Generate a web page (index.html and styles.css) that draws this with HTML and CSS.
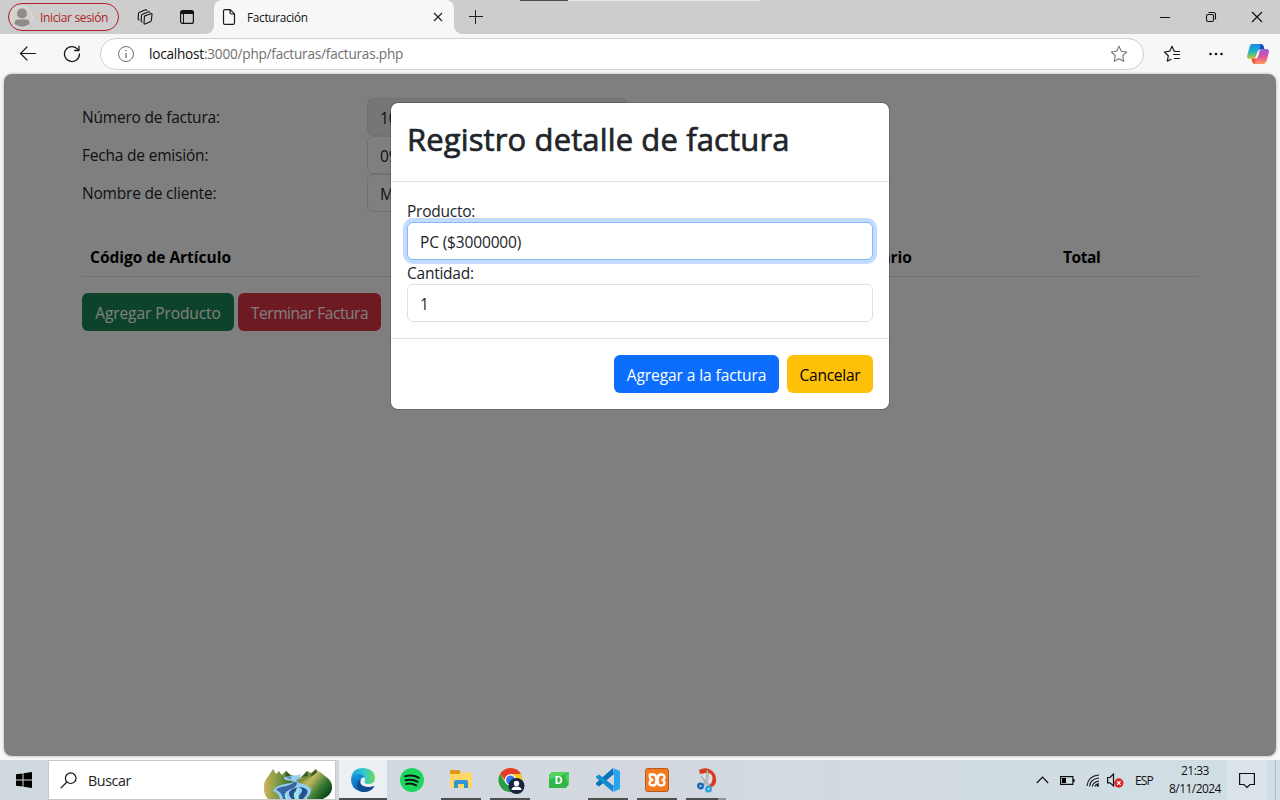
FILE: index.html
```html
<!DOCTYPE html>
<html lang="es">
<head>
<meta charset="utf-8">
<title>Facturación</title>
<link rel="stylesheet" href="styles.css">
</head>
<body>
<div class="screen">
  <header class="titlebar">
    <span class="snap-strip"></span>
    <div class="profile">
      <svg width="22" height="22" viewBox="0 0 22 22"><circle cx="11" cy="11" r="10.5" fill="#d3d0cc" stroke="#dfddda"/><circle cx="11" cy="7.500" r="5" fill="#8f8b88"/><path d="M3.500 18v-1q0-3.500 3.500-3.500h8q3.500 0 3.500 3.500v1q-7 5.500-15 0z" fill="#8f8b88"/></svg>
      <span class="profile-label">Iniciar sesión</span>
    </div>
    <svg class="ico workspaces" width="18" height="18" viewBox="0 0 18 18" fill="none" stroke="#111" stroke-width="1.1" stroke-linejoin="round" stroke-linecap="round"><path d="M8.500 8 15 5.700q1.200-.2 1 .8l-.7 6q-.1 1-1 1.300l-5.300 2.200q-1.100.3-1-.8z"/><path d="M6 14q-1-.4-.9-1.400l.4-4.900q.1-1 1-1.400l6.100-2.500q.9-.2 1.200.6"/><path d="M3 12q-1-.4-.9-1.400l.4-4.900q.1-1 1-1.400l6.100-2.500q.9-.2 1.200.6"/></svg>
    <svg class="ico tabs-menu" width="16" height="16" viewBox="0 0 16 16"><rect x="1.600" y="1.600" width="12.800" height="12.800" rx="2" fill="none" stroke="#111" stroke-width="1.200"/><path d="M1.500 5V3q0-1.500 1.500-1.500h10q1.500 0 1.500 1.500v2z" fill="#111"/><path d="M4.500 5v9" stroke="#111"/></svg>
    <div class="tab">
      <svg width="14" height="18" viewBox="0 0 14 18" fill="none" stroke="#1b1b1b" stroke-width="1.200" stroke-linejoin="round"><path d="M3 1.600h5.200l4.300 4.300v8.600q0 1.900-1.500 1.900H3q-1.500 0-1.500-1.500V3.100Q1.500 1.600 3 1.600zM8 1.800v2.700q0 1.500 1.500 1.500h2.800"/></svg>
      <span class="tab-label">Facturación</span>
      <svg class="tab-close" width="10" height="10" viewBox="0 0 10 10" stroke="#222" stroke-width="1.200"><path d="M1 1l8 8M9 1 1 9"/></svg>
    </div>
    <svg class="ico new-tab" width="14" height="14" viewBox="0 0 14 14" stroke="#222" stroke-width="1"><path d="M6.500 0v14M0 6.500h14"/></svg>
    <div class="window-buttons">
      <svg width="46" height="34" viewBox="0 0 46 34" fill="none" stroke="#111"><path d="M18 17.500h10"/></svg>
      <svg width="46" height="34" viewBox="0 0 46 34" fill="none" stroke="#111" stroke-width="1.100"><rect x="18.500" y="14.500" width="7" height="7" rx="1.500"/><path d="M20.500 12.500h5q2 0 2 2v5"/></svg>
      <svg width="46" height="34" viewBox="0 0 46 34" fill="none" stroke="#111" stroke-width="1.200"><path d="M18 12l10 10M28 12 18 22"/></svg>
    </div>
  </header>

  <nav class="toolbar">
    <svg class="back" width="18" height="16" viewBox="0 0 18 16" fill="none" stroke="#1b1b1b" stroke-width="1.200" stroke-linecap="round" stroke-linejoin="round"><path d="M16.500 7.500h-15M8 1 1.500 7.500 8 14"/></svg>
    <svg class="reload" width="18" height="18" viewBox="0 0 18 18" fill="none" stroke="#1b1b1b" stroke-width="1.300" stroke-linecap="round" stroke-linejoin="round"><path d="M16.500 9A7.500 7.500 0 1 1 14.800 4.300l1.200 1M16 1.200v4.300h-4.300"/></svg>
    <div class="address">
      <svg width="18" height="18" viewBox="0 0 18 18" fill="none" stroke="#6b6b6b"><circle cx="9" cy="9" r="7.500"/><path d="M9 8v5M9 5v1.300" stroke-width="1.200"/></svg>
      <span class="url"><b>localhost</b>:3000/php/facturas/facturas.php</span>
      <svg class="fav" width="18" height="18" viewBox="0 0 18 18" fill="none" stroke="#777" stroke-width="1.100" stroke-linejoin="round"><path d="M9 1.300l2.300 5 5.400.7-4 3.700 1.100 5.600L9 13.700l-4.800 2.600 1.100-5.600L1.300 7l5.400-.7z"/></svg>
    </div>
    <svg class="favorites" width="18" height="18" viewBox="0 0 18 18" fill="none" stroke="#1b1b1b" stroke-width="1.200" stroke-linejoin="round" stroke-linecap="round"><path d="M12 6.200h-.8L9 1.300 6.700 6.200l-5.300.8 3.900 3.800-1 5.300L8 14.300M12.500 6.500h4M10.500 9.500h6M11.500 13.500h5"/></svg>
    <svg class="more" width="14" height="4" viewBox="0 0 14 4" fill="#111"><circle cx="1.500" cy="2" r="1.300"/><circle cx="7" cy="2" r="1.300"/><circle cx="12.500" cy="2" r="1.300"/></svg>
    <svg class="copilot" width="22" height="20" viewBox="0 0 22 20">
      <defs>
        <linearGradient id="cpA" x1="0" y1="0" x2="0" y2="1"><stop offset="0" stop-color="#1789e8"/><stop offset=".5" stop-color="#23b5c5"/><stop offset=".8" stop-color="#79c45a"/><stop offset="1" stop-color="#e8c63a"/></linearGradient>
        <linearGradient id="cpB" x1="0" y1="0" x2="0" y2="1"><stop offset="0" stop-color="#9c5be8"/><stop offset=".5" stop-color="#e04fa0"/><stop offset="1" stop-color="#ff9a55"/></linearGradient>
      </defs>
      <path d="M10 0h4q2 0 2.600 2l1 3.500H12z" fill="#164cc4"/>
      <path d="M5 0h7q2 0 1.400 2L9.800 13q-.8 2-2.800 2H3q-3.600 0-2.800-3.500L2.500 3Q3.300 0 5 0z" fill="url(#cpA)"/>
      <path d="M4.500 14.500H9L10.500 20H8q-2.300 0-2.900-2.500z" fill="#f0583a"/>
      <path d="M14.500 5H19q3.600 0 2.800 3.500L19.500 17q-.8 3-3 3H9q-1.500 0-.9-2l4-11q.7-2 2.400-2z" fill="url(#cpB)"/>
      <path d="M10.500 8q.8-2.200 3.400-2.200-1 .5-1.500 2L11 12.500q-.7 2-3 2z" fill="#fff"/>
    </svg>
  </nav>

  <div class="viewport">
    <main class="page">
      <section class="invoice">
        <span class="label">Número de factura:</span><div class="field readonly">10</div>
        <span class="label">Fecha de emisión:</span><div class="field">09</div>
        <span class="label">Nombre de cliente:</span><div class="field">M</div>
      </section>
      <div class="table-head">
        <span class="th-code">Código de Artículo</span>
        <span class="th-unit">Valor Unitario</span>
        <span class="th-total">Total</span>
      </div>
      <div class="actions">
        <button class="btn success">Agregar Producto</button>
        <button class="btn danger">Terminar Factura</button>
      </div>
    </main>
    <div class="backdrop">
      <div class="modal">
        <div class="modal-header"><h2 class="modal-title">Registro detalle de factura</h2></div>
        <div class="modal-body">
          <span class="modal-label">Producto:</span>
          <div class="field focused"><span class="product">PC ($3000000)</span></div>
          <span class="modal-label">Cantidad:</span>
          <div class="field">1</div>
        </div>
        <div class="modal-footer">
          <button class="btn primary">Agregar a la factura</button>
          <button class="btn warning">Cancelar</button>
        </div>
      </div>
    </div>
  </div>

  <footer class="taskbar">
    <div class="start"><svg width="16" height="16" viewBox="0 0 16 16"><path d="M0 2.300 6.500 1.400V7.500H0zM7.500 1.200 16 0v7.500H7.500zM0 8.500h6.500v6.100L0 13.700zM7.500 8.500H16V16l-8.500-1.200z"/></svg></div>
    <div class="search">
      <svg width="17" height="17" viewBox="0 0 17 17" fill="none" stroke="#111" stroke-width="1.200"><circle cx="10.700" cy="6.200" r="5.300"/><path d="M6.900 10 .7 16.200"/></svg>
      <span class="search-label">Buscar</span>
      <svg class="landscape" width="70" height="32" viewBox="0 0 70 32">
        <defs>
          <linearGradient id="hillA" x1="0" x2="1"><stop offset="0" stop-color="#cdb45c"/><stop offset=".4" stop-color="#7f9a45"/><stop offset="1" stop-color="#0c4d20"/></linearGradient>
          <linearGradient id="hillB" x1="0" x2="1" y2=".7"><stop offset="0" stop-color="#55742e"/><stop offset=".4" stop-color="#c0b860"/><stop offset=".7" stop-color="#3c7c35"/><stop offset="1" stop-color="#064417"/></linearGradient>
        </defs>
        <path d="M14 12 23 4l5 4 4 1 6 1 6-6 4 2 5-4 5 7-9 12H16z" fill="#7c8f3c"/>
        <path d="M23 4l-1 6 8 2-3-4zM53 2l-6 7 7-1zM44 4l-5 6 6-1z" fill="#345d2d"/>
        <path d="M1 22Q0 16 4 11l6-9 3 5 3-3 6 9 13 3-10 6-8 10H5Q1 28 1 22z" fill="url(#hillA)"/>
        <path d="M36 16 48 10l8-6 6 5q8 5 7 13-1 6-9 10H44z" fill="url(#hillB)"/>
        <path d="M21 10l9-1 5-1 4-1-4 3 4 1-6 2 3 3q10 2 12 6 1 4-5 10H17q-1-6-7-8 2-6 18-8l3-2-9-1z" fill="#92cdf2"/>
        <path d="M23 10.500h6l-2 1.500zM29 13.500l5-2M31 15q-4 4-13 5-4 1-5 3 6 2 7 9h4q-5-6 2-9 8-2 8-8z" fill="#3a67a3"/>
        <path d="M27 24q-3 3 2 8h4q-4-5 0-8l3-4q-6 1-9 4zM36 20q5 2 2 6-3 3-2 6h4q6-6 4-9-3-3-8-3z" fill="#28508a"/>
        <path d="M34 20q4 2 1 6-1 3 1 6h-4q-3-5 1-8zM24 25q-2 4 2 7h-3q-3-4 1-7z" fill="#9be6e8"/>
      </svg>
    </div>
    <div class="apps">
      <div class="app active open"><svg width="26" height="26" viewBox="0 0 26 26">
        <defs><linearGradient id="edA" x1="0" x2="1"><stop offset="0" stop-color="#1ba0df"/><stop offset=".55" stop-color="#33c6cf"/><stop offset="1" stop-color="#6bdc56"/></linearGradient><linearGradient id="edB" x1="0" y1="0" x2=".4" y2="1"><stop offset="0" stop-color="#1aa4e0"/><stop offset="1" stop-color="#0759b1"/></linearGradient></defs>
        <path d="M1 12Q2 1 13 1q12 1 12 10 0 6-7 6-5-.5-3-3 1-6-6-6-6 0-8 4z" fill="url(#edA)"/>
        <path d="M1 12q2-5 8-5 4 0 6 3-5 0-5 6 0 6 6 8-3 2-7 0-8-3-8-12z" fill="url(#edB)"/>
        <path d="M10.500 12.500q-1 5 3 6.500 5 2 10 0 1 0 .5 1-3 5-10 5-6-1-7-6-.5-5 3.500-6.500z" fill="#124d91"/>
      </svg></div>
      <div class="app"><svg width="24" height="24" viewBox="0 0 24 24"><circle cx="12" cy="12" r="12" fill="#1ed760"/><path d="M5 8.300q7.500-2 14 1.500M5.500 12.300q6.500-1.800 12 1.400M6.200 16q5-1.400 10 1.300" fill="none" stroke="#0a1a0f" stroke-width="2" stroke-linecap="round"/></svg></div>
      <div class="app open"><svg width="22" height="20" viewBox="0 0 22 20"><path d="M0 1q0-1 1-1h8l2 3v4H0z" fill="#dc9b12"/><path d="M0 4h9l2-1.500h10q1 0 1 1V17q0 1-1 1H1q-1 0-1-1z" fill="#ffd766"/><path d="M4 18v-6q0-2 2-2h10q2 0 2 2v6h-4v-4H8v4z" fill="#3193d8"/></svg></div>
      <div class="app open"><svg class="chrome" width="27" height="27" viewBox="0 0 27 27"><circle cx="12.500" cy="13" r="12" fill="#fbc91e"/><path d="M2.100 7A12 12 0 0 1 23 7H12.500L9 15z" fill="#e33b2e"/><path d="M2.100 7A12 12 0 0 0 12.500 25l4-7-9-2z" fill="#259f4a"/><circle cx="12.500" cy="13" r="5.800" fill="#fff"/><circle cx="12.500" cy="13" r="4.500" fill="#3279ec"/><circle cx="18.500" cy="19" r="8" fill="#17243d"/><circle cx="18.500" cy="16.500" r="2.700" fill="#fff"/><path d="M13.500 23q0-3.500 5-3.500t5 3.500z" fill="#fff"/></svg></div>
      <div class="app"><svg width="20" height="16" viewBox="0 0 20 16"><path d="M3 0h17v12l-3 4H0V3z" fill="#2fb747"/><path d="M3 0h17l-10 5L0 7V3zM20 0v12l-4-7z" fill="#53d35c"/><text class="app-letter" x="5.500" y="12">D</text></svg></div>
      <div class="app open"><svg width="24" height="24" viewBox="0 0 24 24"><path d="M17 0l1 6L3 18.500 0 16.500v-1.500z" fill="#0873bb"/><path d="M0 8.500 3 6.500 18 18l-1 6L0 9.500z" fill="#168bd2"/><path d="M17 0l7 3v18l-7 3q1-.5 1-2V2q0-1.500-1-2z" fill="#27a4ef"/></svg></div>
      <div class="app open"><svg width="24" height="24" viewBox="0 0 24 24"><rect x=".5" y=".5" width="23" height="23" rx="2" fill="#f47a20" stroke="#b75a20"/><path d="M4.800 6.500H8q3 0 3 3v1.300h2V9.500q0-3 3-3 4 0 3.500 3 0 1.500-2 2.500 2 1 2 2.800 0 2.700-3.500 2.700t-3-3v-1.300h-2v1.300q0 3-3 3-3.500 0-3.500-2.700Q4.500 13 7.500 12 4.800 11 4.800 9z" fill="none" stroke="#fff" stroke-width="2.300" stroke-linejoin="round"/></svg></div>
      <div class="app open stacked"><svg class="snip" width="20" height="25" viewBox="0 0 20 25"><path d="M2 2Q7-1 13 1.500q7 4 6 12-1 5-5 5.500-2-1-1-2.500 3-3 2.500-7.500Q14.500 5 9 5L3 6z" fill="#d83b1d"/><path d="M8 5q6-1 7 4 .5 4-2 7l-7-6z" fill="#e0e0e1"/><path d="M10 2q2 2 1 10l-4 6-1-1 3-6zM4 8l9 9-1 2-5-6z" fill="#c6cacd" stroke="#989da1" stroke-width=".7"/><circle cx="3.500" cy="18" r="2.300" fill="none" stroke="#1469b3" stroke-width="2.400"/><circle cx="11.500" cy="21" r="2.300" fill="none" stroke="#27a2e4" stroke-width="2.400"/></svg></div>
    </div>
    <div class="tray">
      <svg class="t-up" width="13" height="8" viewBox="0 0 13 8" fill="none" stroke="#111" stroke-width="1.200"><path d="M.8 7 6.500 1.200 12.200 7"/></svg>
      <svg class="t-bat" width="15" height="9" viewBox="0 0 15 9"><path d="M.6.600h12.300v7.800H.6zM14 3v3" fill="none" stroke="#111" stroke-width="1.200"/><path d="M2 2h4v5H2z"/></svg>
      <svg class="t-wifi" width="14" height="13" viewBox="0 0 14 13" fill="none" stroke="#111" stroke-width="1.100"><path d="M1 12Q2 2 13 1M3.600 12.500Q4 5 13 4M6.300 12.500Q7 8 13 7M9 12.500q.5-2.500 4-2.700"/><circle cx="11.800" cy="11.500" r="1.200" fill="#111" stroke="none"/></svg>
      <svg class="t-vol" width="17" height="15" viewBox="0 0 17 15"><path d="M.6 4.500H3L6.500 1v12L3 9.800H.6z" fill="none" stroke="#111" stroke-width="1.200"/><circle cx="11.800" cy="10" r="4.700" fill="#d9252c"/><path d="M10 8.200l3.600 3.600M13.600 8.200 10 11.800" stroke="#fff" stroke-width="1.200"/></svg>
      <span class="lang">ESP</span>
      <div class="clock"><span class="time">21:33</span><span class="date">8/11/2024</span></div>
      <div class="notify"><svg width="16" height="17" viewBox="0 0 16 17" fill="none" stroke="#111" stroke-width="1.200"><path d="M.6 1.500h14.800v11H11l-3 3-3-3H.6z"/></svg></div>
      <span class="peek"></span>
    </div>
  </footer>
</div>
</body>
</html>
```

FILE: styles.css
```css
* { box-sizing: border-box; }
body { margin: 0; font-family: "Open Sans", "Noto Sans", sans-serif; }
svg { display: block; flex: none; }
span, .field, .btn, .modal-title { white-space: nowrap; }

.screen { width: 1280px; height: 800px; display: flex; flex-direction: column; overflow: hidden; background: #f7f7f7; }

/* Title bar */
.titlebar { position: relative; height: 34px; flex: none; display: flex; align-items: center; background: #cdcdcd; }
.snap-strip { position: absolute; left: 520px; top: 0; width: 241px; height: 1px; background: linear-gradient(to right, #4c4c4c 48px, #e5e5e5 48px); }
.profile { width: 111px; height: 28px; margin-left: 8px; padding-left: 2px; display: flex; align-items: center; gap: 7px; border: 1px solid #b01e28; border-radius: 14px; color: #b01e28; }
.profile-label { font-size: 12px; letter-spacing: -0.35px; }
.workspaces { margin-left: 17px; }
.tabs-menu { margin-left: 25px; }
.tab { position: relative; width: 240px; height: 34px; margin-left: 19px; padding: 0 11px 0 8px; display: flex; align-items: center; background: #f7f7f7; border-radius: 8px 8px 0 0; }
.tab::before, .tab::after { content: ""; position: absolute; bottom: 0; width: 8px; height: 8px; }
.tab::before { left: -8px; background: radial-gradient(circle at 0 0, #cdcdcd 7.5px, #f7f7f7 8px); }
.tab::after { right: -8px; background: radial-gradient(circle at 100% 0, #cdcdcd 7.5px, #f7f7f7 8px); }
.tab-label { margin-left: 11px; padding-bottom: 1px; font-size: 11.8px; letter-spacing: -0.3px; color: #111; }
.tab-close { margin-left: auto; }
.new-tab { margin-left: 15px; }
.window-buttons { margin-left: auto; display: flex; }

/* Address bar */
.toolbar { height: 40px; flex: none; display: flex; align-items: center; padding-left: 19px; }
.reload { margin-left: 26px; }
.address { width: 1044px; height: 32px; margin-left: 19px; padding: 0 15px 0 16px; display: flex; align-items: center; border: 1px solid #d0d0d0; border-radius: 16px; background: #fff; }
.url { margin-left: 14px; padding-bottom: 1px; font-size: 13.6px; letter-spacing: -0.22px; color: #707070; }
.url b { font-weight: 400; color: #111; }
.fav { margin-left: auto; }
.favorites { margin-left: 19px; }
.more { margin-left: 28px; }
.copilot { margin-left: 24px; }

/* Web page */
.viewport { position: relative; width: 1272px; height: 682px; margin: 0 4px 4px; flex: none; overflow: hidden; border-radius: 8px; background: #fff; box-shadow: 0 0 3px rgba(0, 0, 0, .35); color: #212529; font-size: 15.5px; line-height: 25px; }
.page { padding: 24px 78px; }
.invoice { display: grid; grid-template-columns: 285px 261px; align-items: center; }
.label { padding-top: 1px; letter-spacing: -0.2px; }
.field { height: 38px; padding: 6px 12px; border: 1px solid #dee2e6; border-radius: 6px; background: #fff; line-height: 26px; }
.readonly { background: #e9ecef; }
.table-head { height: 41px; margin-top: 24px; padding: 8px; display: grid; grid-template-columns: 713px 260px 1fr; border-bottom: 1px solid #dee2e6; color: #000; font-weight: 700; line-height: 26px; }
.th-total { letter-spacing: -0.4px; }
.actions { display: flex; gap: 4px; margin-top: 16px; }
.btn { height: 38px; padding: 1px 0 0; border: 0; border-radius: 6px; color: #fff; font: 400 15.5px/24px "Open Sans", "Noto Sans", sans-serif; letter-spacing: -0.08px; }
.success { width: 152px; background: #198754; }
.danger { width: 143px; background: #dc3545; letter-spacing: -0.45px; }
.backdrop { position: absolute; inset: 0; padding-top: 28px; background: rgba(0, 0, 0, .5); }
.modal { width: 500px; height: 308px; margin: 0 auto; border: 1px solid rgba(0, 0, 0, .18); border-radius: 8px; background: #fff; background-clip: padding-box; }
.modal-header { height: 79px; padding: 16px; border-bottom: 1px solid #dee2e6; }
.modal-title { margin: 0; font-size: 31px; line-height: 41px; font-weight: 400; letter-spacing: 0.13px; -webkit-text-stroke: 0.7px #212529; }
.modal-body { height: 157px; padding: 16px; display: flex; flex-direction: column; border-bottom: 1px solid #dee2e6; }
.modal-label { height: 24px; line-height: 26px; letter-spacing: -0.25px; }
.modal-body .field { flex: none; }
.focused { border-color: #86b7fe; box-shadow: 0 0 0 4px #c2dbfe; }
.product { letter-spacing: -0.15px; }
.modal-footer { padding: 16px; display: flex; justify-content: flex-end; gap: 8px; }
.primary { width: 165px; background: #0d6efd; }
.warning { width: 86px; background: #ffc107; color: #000; letter-spacing: -0.25px; }

/* Taskbar */
.taskbar { height: 40px; flex: none; display: flex; background: linear-gradient(to right, #d0dae0, #d3d8df 50%, #d0dfe5); color: #111; }
.start { width: 48px; display: grid; place-items: center; }
.search { width: 288px; height: 40px; padding: 0 2px 0 11px; display: flex; align-items: center; border: 1px solid #c6c8ca; background: #fff; }
.search-label { margin-left: 11px; font-size: 14.3px; letter-spacing: -0.4px; color: #222; }
.landscape { margin-left: auto; align-self: flex-end; }
.apps { display: flex; margin-left: 3px; gap: 1px; }
.app { position: relative; width: 48px; height: 40px; display: grid; place-items: center; }
.app.active { background: #edf0f2; }
.app.open::after { content: ""; position: absolute; left: 4px; right: 4px; bottom: 0; height: 2px; background: #4d504f; }
.app.active::after { left: 0; right: 0; }
.app.stacked::after { background: linear-gradient(to right, #4d504f 32px, #929698 32px); }
.chrome, .snip { margin-left: 2px; }
.app-letter { font: 700 11px "Open Sans", sans-serif; fill: #fff; }
.tray { margin-left: auto; display: flex; align-items: center; }
.t-bat { margin-left: 11px; }
.t-wifi { margin-left: 11px; }
.t-vol { margin-left: 7px; }
.lang { width: 19px; margin-left: 11px; font-size: 12px; letter-spacing: -0.9px; }
.clock { width: 64px; margin-left: 9px; display: flex; flex-direction: column; align-items: center; font-size: 12px; line-height: 18px; letter-spacing: -0.55px; }
.notify { width: 40px; height: 40px; margin-right: 8px; display: grid; place-items: center; background: #dbe3ea; }
.peek { width: 5px; height: 40px; border-left: 1px solid #aeb9bf; }
```
